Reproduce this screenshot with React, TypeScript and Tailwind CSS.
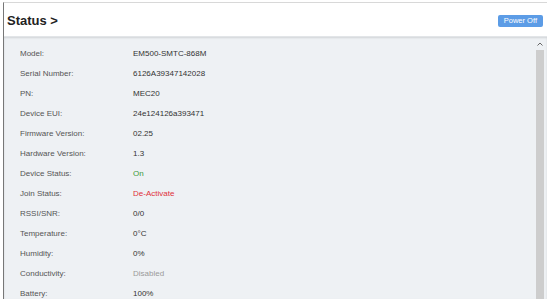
import React from 'react'

type Row = { label: string; value: string; tone?: 'ok' | 'bad' | 'off' }

const rows: Row[] = [
    { label: 'Model:', value: 'EM500-SMTC-868M' },
    { label: 'Serial Number:', value: '6126A39347142028' },
    { label: 'PN:', value: 'MEC20' },
    { label: 'Device EUI:', value: '24e124126a393471' },
    { label: 'Firmware Version:', value: '02.25' },
    { label: 'Hardware Version:', value: '1.3' },
    { label: 'Device Status:', value: 'On', tone: 'ok' },
    { label: 'Join Status:', value: 'De-Activate', tone: 'bad' },
    { label: 'RSSI/SNR:', value: '0/0' },
    { label: 'Temperature:', value: '0°C' },
    { label: 'Humidity:', value: '0%' },
    { label: 'Conductivity:', value: 'Disabled', tone: 'off' },
    { label: 'Battery:', value: '100%' },
]

const toneClass = {
    ok: 'text-[#3a9a3a]',
    bad: 'text-[#e0303a]',
    off: 'text-[#9a9a9a]',
}

function StatusRow({ label, value, tone }: Row): JSX.Element {
    return (
        <div className="flex h-[20px] items-center text-[8px]">
            <span className="w-[113px] text-[#555]">{label}</span>
            <span className={tone ? toneClass[tone] : 'text-[#333]'}>{value}</span>
        </div>
    )
}

export default function App(): JSX.Element {
    return (
        <div
            className="w-[550px] h-[306px] bg-white overflow-hidden"
            style={{ fontFamily: '"Liberation Sans", Arial, sans-serif' }}
        >
            <div className="ml-[3px] mr-[3px] mt-[2px] h-[297px] border-t border-[#d8d8d8] border-l border-l-[#777] flex flex-col">
                <div className="h-[33px] shrink-0 flex items-center justify-between pt-[2px] pl-[3px] pr-[4px] bg-white">
                    <span className="font-bold text-[13px] text-[#222]">Status &gt;</span>
                    <button className="h-[12px] px-[6px] rounded-[2px] bg-[#5c9ce6] text-white text-[7.5px] leading-none">
                        Power Off
                    </button>
                </div>
                <div className="flex-1 min-h-0 overflow-hidden flex bg-[#eef1f4] shadow-[inset_0_1px_2px_rgba(0,0,0,0.12)] border-t border-[#e2e5e8]">
                    <div className="flex-1 pl-[16px] pt-[7px]">
                        {rows.map((r) => (
                            <StatusRow key={r.label} {...r} />
                        ))}
                    </div>
                    <div className="w-[8px] mr-[3px] flex flex-col">
                        <div className="h-[13px] shrink-0 flex items-center justify-center">
                            <svg width="6" height="4" viewBox="0 0 6 4">
                                <path d="M0.5 3.5 L3 1 L5.5 3.5" fill="none" stroke="#666" strokeWidth="1" />
                            </svg>
                        </div>
                        <div className="flex-1 bg-[#cdcdcd]" />
                    </div>
                </div>
            </div>
        </div>
    )
}
